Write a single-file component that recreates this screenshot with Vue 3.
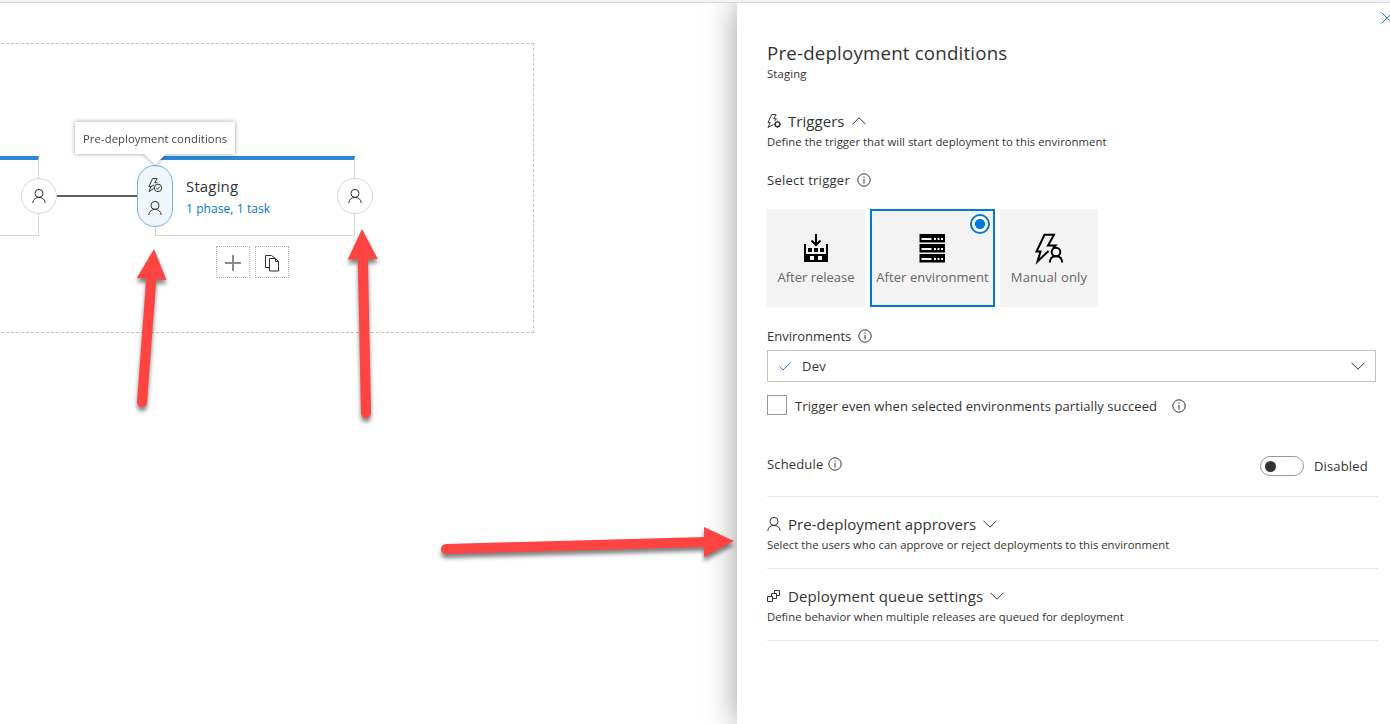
<script setup>
const triggers = [
  { id: 'release', label: 'After release', width: 98 },
  { id: 'environment', label: 'After environment', width: 125, selected: true },
  { id: 'manual', label: 'Manual only', width: 98 },
]

const sections = [
  {
    id: 'person',
    title: 'Pre-deployment approvers',
    text: 'Select the users who can approve or reject deployments to this environment',
  },
  {
    id: 'queue',
    title: 'Deployment queue settings',
    text: 'Define behavior when multiple releases are queued for deployment',
  },
]
</script>

<template>
  <div class="page">
    <svg class="defs" aria-hidden="true">
      <symbol id="person" viewBox="0 0 14 14">
        <circle cx="7" cy="4.400" r="4" />
        <path d="M.8 14C.9 10.600 3.500 8.400 7 8.400S13.100 10.600 13.200 14" />
      </symbol>
      <symbol id="info" viewBox="0 0 14 14">
        <circle cx="7" cy="7" r="6.200" />
        <path d="M7 6v4.500M7 3.500v1.300" />
      </symbol>
      <symbol id="chevron" viewBox="0 0 14 8">
        <path d="M.5 .7L7 7.200L13.500 .7" />
      </symbol>
      <symbol id="bolt-gear" viewBox="0 0 14 14">
        <path d="M6.500 10.300L1 13.500L3.200 8.600H1L4.600 .6H9.200L6.700 4.700H9.500L7.500 7" />
        <circle cx="10.500" cy="10.300" r="2.400" stroke-width="1.400" />
        <path d="M10.500 6.800v1M10.500 12.800v1M7 10.300h1M13 10.300h1M8 7.800l.8.800M12.200 12l.8.800M13 7.800l-.8.800M8.800 12l-.8.800" />
      </symbol>
      <symbol id="bolt-check" viewBox="0 0 14 14">
        <path d="M5.800 10.500L1 13.500L2.800 8.600H.8L4.600 .6H9.200L6.700 4.700H9.500M2.800 8.600L6 7" />
        <circle cx="10" cy="9.900" r="3.700" />
        <path d="M8.200 10l1.300 1.200l2.300-2.500" />
      </symbol>
      <symbol id="queue" viewBox="0 0 14 14">
        <path d="M.5 7.500h5v5h-5zM4.500 7.500v-3h5v5h-4M7.500 4.500v-3h5v5h-3" />
      </symbol>
    </svg>

    <div class="topbar"></div>

    <main class="main">
      <section class="canvas">
        <div class="group"></div>
        <div class="card previous"></div>
        <div class="card staging">
          <div class="stage-name">Staging</div>
          <div class="stage-link">1 phase, 1 task</div>
        </div>
        <div class="connector"></div>
        <div class="node left"><svg class="ic14"><use href="#person" /></svg></div>
        <div class="node right"><svg class="ic14"><use href="#person" /></svg></div>
        <div class="pill">
          <svg class="ic14"><use href="#bolt-check" /></svg>
          <svg class="ic14"><use href="#person" /></svg>
        </div>
        <div class="actions">
          <div class="action">
            <svg class="plus" viewBox="0 0 16 16"><path d="M0 8h16M8 0v16" /></svg>
          </div>
          <div class="action">
            <svg class="copy" viewBox="0 0 16 18">
              <path d="M5.500 13.500h-4v-12h6l4 3M5.500 4.500h6l3 3v9.500h-9zM11.500 4.500v3h3" />
            </svg>
          </div>
        </div>
        <div class="tooltip">Pre-deployment conditions</div>
      </section>

      <aside class="panel">
        <svg class="close" viewBox="0 0 12 12"><path d="M.5 .5l11 11M11.500 .5l-11 11" /></svg>
        <h1 class="title">Pre-deployment conditions</h1>
        <div class="subtitle">Staging</div>

        <div class="heading first">
          <svg class="ic14"><use href="#bolt-gear" /></svg>
          <span class="heading-text">Triggers</span>
          <svg class="chev up"><use href="#chevron" /></svg>
        </div>
        <div class="desc">Define the trigger that will start deployment to this environment</div>

        <div class="label select-label">
          <span class="select-text">Select trigger</span><svg class="info"><use href="#info" /></svg>
        </div>

        <div class="tiles">
          <div
            v-for="t in triggers"
            :key="t.id"
            class="tile"
            :class="{ selected: t.selected }"
            :style="{ width: t.width + 'px' }"
          >
            <svg v-if="t.id === 'release'" class="tile-icon" viewBox="0 0 30 30">
              <path class="fill" d="M3 10h2v10h20v-10h2v18h-24z" />
              <path class="fill" d="M7 14h4v4h-4zM13 14h4v4h-4zM19 14h4v4h-4z" />
              <path class="hole" d="M9 22h4v4h-4zM17 22h4v4h-4z" />
              <path class="thick" d="M15 0v11M10.500 6.500l4.500 4.500l4.500-4.500" />
            </svg>
            <svg v-else-if="t.id === 'environment'" class="tile-icon" viewBox="0 0 30 30">
              <g v-for="y in [0, 10, 20]" :key="y">
                <rect class="fill" x="1.500" :y="y" width="25.500" height="8.500" />
                <rect class="hole" x="3.500" :y="y + 4" width="10" height="2" />
                <path class="hole" :d="`M16 ${y + 4}h2v2h-2zM19.500 ${y + 4}h2v2h-2zM23 ${y + 4}h2v2h-2z`" />
              </g>
            </svg>
            <svg v-else class="tile-icon" viewBox="0 0 30 30">
              <path class="thick" d="M14.500 17L3.500 27.500L6.500 17.500H2.500L10.500 .8H20L14 11.500H21.500L19 14" />
              <circle class="thick" cx="22" cy="18" r="4.300" />
              <path class="thick" d="M15.800 28.500C16 24.500 18.500 22.300 22 22.300S28 24.500 28.200 28.500" />
            </svg>
            <span class="tile-label" :class="t.id">{{ t.label }}</span>
            <span v-if="t.selected" class="radio"></span>
          </div>
        </div>

        <div class="label env-label">
          <span>Environments</span><svg class="info"><use href="#info" /></svg>
        </div>
        <div class="select">
          <svg class="tick" viewBox="0 0 12 9"><path d="M.5 4.500L4 8L11.500 .7" /></svg>
          <span class="value">Dev</span>
          <svg class="chev"><use href="#chevron" /></svg>
        </div>

        <div class="check-row">
          <span class="checkbox"></span>
          <span class="check-text">Trigger even when selected environments partially succeed</span>
          <svg class="info"><use href="#info" /></svg>
        </div>

        <div class="schedule">
          <div class="label schedule-label">
            <span class="schedule-text">Schedule</span><svg class="info"><use href="#info" /></svg>
          </div>
          <div class="toggle"><span class="knob"></span></div>
          <span class="toggle-text">Disabled</span>
        </div>

        <div v-for="s in sections" :key="s.id" class="section" :class="'section-' + s.id">
          <div class="heading">
            <svg class="ic14"><use :href="'#' + s.id" /></svg>
            <span class="heading-text">{{ s.title }}</span>
            <svg class="chev"><use href="#chevron" /></svg>
          </div>
          <div class="desc">{{ s.text }}</div>
        </div>
      </aside>
    </main>

    <svg class="arrows" viewBox="0 0 1390 724">
      <g>
        <path class="shaft" d="M151.500 276L142 402" />
        <path class="head" d="M154 249L166.500 280L136.800 278z" />
      </g>
      <g>
        <path class="shaft" d="M362.800 256L366 413" />
        <path class="head" d="M362 229L377.800 259L347.800 259.500z" />
      </g>
      <g>
        <path class="shaft" d="M446 549L706 542" />
        <path class="head" d="M734 541L704 557V527z" />
      </g>
    </svg>
  </div>
</template>

<style>
body {
  margin: 0;
  background: #fff;
}
</style>

<style scoped>
.page {
  position: relative;
  width: 1390px;
  height: 724px;
  overflow: hidden;
  display: flex;
  flex-direction: column;
  background: #fff;
  color: #333;
  font-family: "Open Sans", "Noto Sans", sans-serif;
  font-size: 13px;
}
svg {
  display: block;
  flex: none;
  fill: none;
  stroke: #333;
  stroke-width: 1;
  overflow: visible;
}
.defs {
  position: absolute;
  width: 0;
  height: 0;
}
.topbar {
  flex: none;
  box-sizing: border-box;
  height: 3px;
  background: #f4f4f4;
  border-bottom: 1px solid #d6d6d6;
}
.main {
  flex: 1;
  display: flex;
  overflow: hidden;
}
.canvas {
  position: relative;
  width: 737px;
  flex: none;
}
.canvas > div {
  position: absolute;
  box-sizing: border-box;
}
.canvas .group {
  left: -4px;
  top: 40px;
  width: 538px;
  height: 290px;
  border: 1px dashed #c4c4c4;
}
.canvas .card {
  top: 153px;
  width: 200px;
  height: 80px;
  border: 1px solid #d6d6d6;
  border-top: 4px solid #2b88d8;
  background: #fff;
}
.canvas .previous {
  left: -161px;
}
.canvas .staging {
  left: 155px;
  padding: 15px 0 0 30px;
}
.stage-name {
  font-size: 15px;
  line-height: 22px;
  letter-spacing: 0.15px;
  white-space: nowrap;
}
.stage-link {
  margin-top: 1px;
  font-size: 12px;
  line-height: 22px;
  letter-spacing: 0.08px;
  color: #0078d4;
  white-space: nowrap;
}
.canvas .connector {
  left: 57px;
  top: 192px;
  width: 80px;
  height: 2px;
  background: #60605e;
}
.canvas .node {
  top: 175px;
  width: 36px;
  height: 36px;
  border: 1px solid #d6d6d6;
  border-radius: 50%;
  background: #fff;
  display: flex;
  align-items: center;
  justify-content: center;
}
.canvas .left {
  left: 21px;
}
.canvas .right {
  left: 337px;
}
.canvas .pill {
  left: 137px;
  top: 162px;
  width: 36px;
  height: 62px;
  border: 1px solid #71afe5;
  border-radius: 18px;
  background: #eff6fc;
  display: flex;
  flex-direction: column;
  align-items: center;
  justify-content: center;
  gap: 9px;
}
.ic14 {
  width: 14px;
  height: 14px;
}
.canvas .actions {
  left: 216px;
  top: 243px;
  display: flex;
  gap: 5px;
}
.action {
  box-sizing: border-box;
  width: 34px;
  height: 32px;
  border: 1px dotted #b4b4b4;
  display: flex;
  align-items: center;
  justify-content: center;
}
.plus {
  width: 16px;
  height: 16px;
  margin-top: 2px;
  stroke: #8a8a8a;
  stroke-width: 2;
}
.copy {
  width: 16px;
  height: 18px;
  margin-top: 1px;
}
.canvas .tooltip {
  left: 75px;
  top: 119px;
  width: 160px;
  height: 32px;
  padding-left: 8px;
  background: #fff;
  color: #444;
  font-size: 11.300px;
  line-height: 33px;
  letter-spacing: 0.07px;
  white-space: nowrap;
  filter: drop-shadow(0 0 2px rgba(0, 0, 0, 0.4));
}
.tooltip::after {
  content: "";
  position: absolute;
  left: 69px;
  top: 32px;
  border: 11px solid transparent;
  border-top-color: #fff;
  border-bottom: 0;
}
.panel {
  position: relative;
  box-sizing: border-box;
  width: 653px;
  padding: 37px 12px 0 30px;
  background: #fff;
  box-shadow: 0 0 30px rgba(0, 0, 0, 0.4);
}
.close {
  position: absolute;
  left: 644px;
  top: 9px;
  width: 12px;
  height: 12px;
  stroke: #2b78d8;
}
.title {
  margin: 0;
  font-size: 18.700px;
  font-weight: 400;
  line-height: 26px;
  letter-spacing: 0.19px;
}
.subtitle {
  font-size: 11.300px;
  line-height: 16px;
  letter-spacing: 0.15px;
}
.heading {
  display: flex;
  align-items: center;
  height: 20px;
}
.heading.first {
  margin-top: 29px;
}
.heading-text {
  margin: 0 7px;
  font-size: 15px;
  line-height: 20px;
  letter-spacing: 0.04px;
}
.section-queue .heading-text {
  letter-spacing: 0.11px;
}
.chev {
  width: 14px;
  height: 8px;
}
.up {
  transform: scaleY(-1);
}
.desc {
  margin-top: 2px;
  font-size: 11.300px;
  line-height: 18px;
  letter-spacing: 0.04px;
  white-space: nowrap;
}
.section .desc {
  letter-spacing: 0.01px;
}
.label {
  display: flex;
  align-items: center;
  height: 20px;
  gap: 7px;
}
.select-label {
  margin-top: 19px;
}
.select-text {
  letter-spacing: 0.27px;
}
.info {
  width: 14px;
  height: 14px;
}
.tiles {
  display: flex;
  gap: 5px;
  margin-top: 19px;
}
.tile {
  position: relative;
  box-sizing: border-box;
  height: 98px;
  background: #f3f3f3;
  color: #666;
  display: flex;
  flex-direction: column;
  align-items: center;
  padding-top: 25px;
}
.tile.selected {
  border: 2px solid #0078d7;
  padding-top: 23px;
}
.tile-icon {
  width: 30px;
  height: 30px;
}
.fill {
  fill: #000;
  stroke: none;
}
.hole {
  fill: #f3f3f3;
  stroke: none;
}
.thick {
  stroke: #000;
  stroke-width: 2;
}
.tile-label {
  margin-top: 3px;
  line-height: 20px;
  white-space: nowrap;
}
.tile-label.environment {
  letter-spacing: 0.06px;
}
.tile-label.manual {
  letter-spacing: 0.2px;
}
.radio {
  position: absolute;
  right: 3px;
  top: 3px;
  box-sizing: border-box;
  width: 20px;
  height: 20px;
  border: 2px solid #0078d7;
  border-radius: 50%;
  background: radial-gradient(circle, #0078d7 4.700px, #fff 5.400px);
}
.env-label {
  margin-top: 19px;
}
.select {
  box-sizing: border-box;
  width: 609px;
  height: 32px;
  margin-top: 4px;
  padding: 0 10px 0 11px;
  border: 1px solid #c3c3c3;
  display: flex;
  align-items: center;
}
.tick {
  width: 12px;
  height: 9px;
  stroke: #2b78d8;
}
.value {
  flex: 1;
  margin-left: 11px;
  letter-spacing: 0.2px;
}
.check-row {
  display: flex;
  align-items: center;
  height: 20px;
  margin-top: 13px;
}
.checkbox {
  box-sizing: border-box;
  width: 20px;
  height: 20px;
  border: 1px solid #999;
}
.check-text {
  margin: 2px 15px 0 8px;
  letter-spacing: 0.08px;
  white-space: nowrap;
}
.check-row .info {
  margin-top: 2px;
}
.schedule {
  display: flex;
  align-items: center;
  height: 20px;
  padding: 41px 0 20px;
  border-bottom: 1px solid #e6e6e6;
}
.schedule-label {
  flex: 1;
  gap: 5px;
  margin-top: -4px;
}
.schedule-text {
  letter-spacing: 0.15px;
}
.toggle {
  box-sizing: border-box;
  width: 44px;
  height: 20px;
  padding: 4px;
  border: 1px solid #999;
  border-radius: 10px;
}
.knob {
  display: block;
  width: 11px;
  height: 11px;
  border-radius: 50%;
  background: #333;
}
.toggle-text {
  width: 54px;
  margin: 0 10px;
  letter-spacing: 0.15px;
}
.section {
  height: 54px;
  padding-top: 17px;
  border-bottom: 1px solid #e6e6e6;
}
.arrows {
  position: absolute;
  left: 0;
  top: 0;
  width: 1390px;
  height: 724px;
  pointer-events: none;
}
.arrows g {
  filter: drop-shadow(0 4px 2px rgba(0, 0, 0, 0.5));
}
.shaft {
  stroke: #fe4343;
  stroke-width: 10;
  stroke-linecap: round;
}
.head {
  fill: #fe4343;
  stroke: none;
}
</style>
